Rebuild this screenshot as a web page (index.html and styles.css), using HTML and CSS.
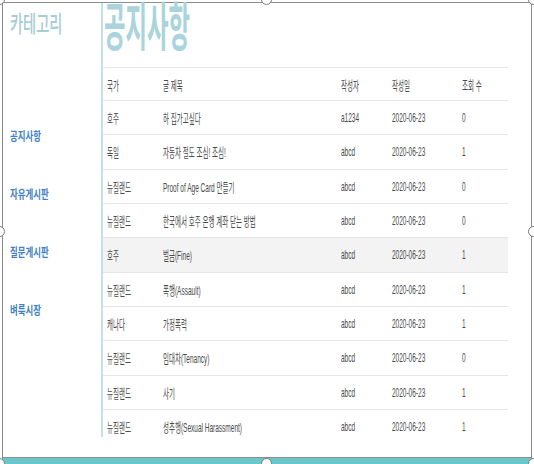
FILE: index.html
```html
<!DOCTYPE html>
<html lang="ko">
<head>
<meta charset="utf-8">
<link rel="stylesheet" href="styles.css">
</head>
<body>
<div class="frame">
  <div class="shot">
    <aside class="side">
      <div class="cat"><span class="sq-cat">카테고리</span></div>
      <nav class="nav">
        <a class="nav-item"><span class="sq-nav">공지사항</span></a>
        <a class="nav-item"><span class="sq-nav">자유게시판</span></a>
        <a class="nav-item"><span class="sq-nav">질문게시판</span></a>
        <a class="nav-item"><span class="sq-nav">벼룩시장</span></a>
      </nav>
    </aside>
    <main class="main">
      <h1 class="title"><span class="sq-title">공지사항</span></h1>
      <div class="board">
        <div class="row head">
          <div class="c c1"><span class="sq">국가</span></div>
          <div class="c c2"><span class="sq">글 제목</span></div>
          <div class="c c3"><span class="sq">작성자</span></div>
          <div class="c c4"><span class="sq">작성일</span></div>
          <div class="c c5"><span class="sq">조회 수</span></div>
        </div>
        <div class="row">
          <div class="c c1"><span class="sq">호주</span></div>
          <div class="c c2"><span class="sq">하 집가고싶다</span></div>
          <div class="c c3"><span class="sq">a1234</span></div>
          <div class="c c4"><span class="sq">2020-06-23</span></div>
          <div class="c c5"><span class="sq">0</span></div>
        </div>
        <div class="row">
          <div class="c c1"><span class="sq">독일</span></div>
          <div class="c c2"><span class="sq">자동차 절도 조심! 조심!</span></div>
          <div class="c c3"><span class="sq">abcd</span></div>
          <div class="c c4"><span class="sq">2020-06-23</span></div>
          <div class="c c5"><span class="sq">1</span></div>
        </div>
        <div class="row">
          <div class="c c1"><span class="sq">뉴질랜드</span></div>
          <div class="c c2"><span class="sq">Proof of Age Card 만들기</span></div>
          <div class="c c3"><span class="sq">abcd</span></div>
          <div class="c c4"><span class="sq">2020-06-23</span></div>
          <div class="c c5"><span class="sq">0</span></div>
        </div>
        <div class="row">
          <div class="c c1"><span class="sq">뉴질랜드</span></div>
          <div class="c c2"><span class="sq">한국에서 호주 은행 계좌 닫는 방법</span></div>
          <div class="c c3"><span class="sq">abcd</span></div>
          <div class="c c4"><span class="sq">2020-06-23</span></div>
          <div class="c c5"><span class="sq">0</span></div>
        </div>
        <div class="row hl">
          <div class="c c1"><span class="sq">호주</span></div>
          <div class="c c2"><span class="sq">벌금(Fine)</span></div>
          <div class="c c3"><span class="sq">abcd</span></div>
          <div class="c c4"><span class="sq">2020-06-23</span></div>
          <div class="c c5"><span class="sq">1</span></div>
        </div>
        <div class="row">
          <div class="c c1"><span class="sq">뉴질랜드</span></div>
          <div class="c c2"><span class="sq">폭행(Assault)</span></div>
          <div class="c c3"><span class="sq">abcd</span></div>
          <div class="c c4"><span class="sq">2020-06-23</span></div>
          <div class="c c5"><span class="sq">1</span></div>
        </div>
        <div class="row">
          <div class="c c1"><span class="sq">캐나다</span></div>
          <div class="c c2"><span class="sq">가정폭력</span></div>
          <div class="c c3"><span class="sq">abcd</span></div>
          <div class="c c4"><span class="sq">2020-06-23</span></div>
          <div class="c c5"><span class="sq">1</span></div>
        </div>
        <div class="row">
          <div class="c c1"><span class="sq">뉴질랜드</span></div>
          <div class="c c2"><span class="sq">임대차(Tenancy)</span></div>
          <div class="c c3"><span class="sq">abcd</span></div>
          <div class="c c4"><span class="sq">2020-06-23</span></div>
          <div class="c c5"><span class="sq">0</span></div>
        </div>
        <div class="row">
          <div class="c c1"><span class="sq">뉴질랜드</span></div>
          <div class="c c2"><span class="sq">사기</span></div>
          <div class="c c3"><span class="sq">abcd</span></div>
          <div class="c c4"><span class="sq">2020-06-23</span></div>
          <div class="c c5"><span class="sq">1</span></div>
        </div>
        <div class="row">
          <div class="c c1"><span class="sq">뉴질랜드</span></div>
          <div class="c c2"><span class="sq">성추행(Sexual Harassment)</span></div>
          <div class="c c3"><span class="sq">abcd</span></div>
          <div class="c c4"><span class="sq">2020-06-23</span></div>
          <div class="c c5"><span class="sq">1</span></div>
        </div>
      </div>
    </main>
  </div>
  <div class="spacer"></div>
  <div class="bar"></div>
</div>
<span class="handle h-tl"></span>
<span class="handle h-tm"></span>
<span class="handle h-tr"></span>
<span class="handle h-ml"></span>
<span class="handle h-mr"></span>
<span class="handle h-bl"></span>
<span class="handle h-bm"></span>
<span class="handle h-br"></span>
</body>
</html>
```
FILE: styles.css
```css
html, body {
  margin: 0;
  padding: 0;
}
body {
  width: 534px;
  height: 464px;
  overflow: hidden;
  position: relative;
  background: #ffffff;
  font-family: "Liberation Sans", "Noto Sans CJK KR", sans-serif;
}
.frame {
  margin: 2px 2px 0 2px;
  height: 462px;
  box-sizing: border-box;
  border: 1px solid #8c8c8c;
  border-bottom: none;
  display: flex;
  flex-direction: column;
  background: #fff;
}
.shot {
  display: flex;
  height: 434px;
  flex: none;
}
.spacer {
  flex: 1;
}
.bar {
  height: 6px;
  background: #6ac7cb;
  border-top: 1px solid #8c8c8c;
}

/* sidebar */
.side {
  width: 100px;
  flex: none;
  padding: 8px 0 0 7px;
  box-sizing: border-box;
  border-right: 2px solid #c6e1e6;
}
.cat {
  font-family: "Noto Sans CJK KR", sans-serif;
  font-size: 23px;
  line-height: 22px;
  font-weight: 500;
  color: #a6ccd5;
  white-space: nowrap;
}
.sq-cat {
  display: inline-block;
  transform: scaleX(0.62);
  transform-origin: left center;
}
.nav {
  display: flex;
  flex-direction: column;
  gap: 46px;
  margin-top: 97px;
}
.nav-item {
  font-family: "Noto Sans CJK KR", sans-serif;
  font-size: 12px;
  line-height: 12px;
  font-weight: 700;
  color: #4080c3;
  white-space: nowrap;
}
.sq-nav {
  display: inline-block;
  transform: scaleX(0.7);
  transform-origin: left center;
}

/* main */
.main {
  flex: 1;
  min-width: 0;
}
.title {
  margin: 0 0 22px 1px;
  font-family: "Noto Sans CJK KR", sans-serif;
  font-size: 52px;
  line-height: 42px;
  font-weight: 700;
  color: #a9d4db;
  white-space: nowrap;
}
.sq-title {
  display: inline-block;
  transform: scaleX(0.45);
  transform-origin: left center;
}
.board {
  width: 405px;
  height: 370px;
  overflow: hidden;
  border-top: 1px solid #e6e6e6;
  box-sizing: border-box;
}
.row {
  display: flex;
  height: 34.33px;
  box-sizing: border-box;
  border-bottom: 1px solid #e6e6e6;
  align-items: center;
  font-size: 13px;
  color: #4a4a4a;
}
.row.head {
  height: 33px;
}
.row.hl {
  background: #f3f3f3;
}
.c {
  padding-left: 4px;
  box-sizing: border-box;
  white-space: nowrap;
  flex: none;
}
.c1 { width: 56px; }
.c2 { width: 178px; }
.c3 { width: 51px; }
.c4 { width: 70px; }
.c5 { width: 50px; }
.sq {
  display: inline-block;
  transform: scaleX(0.5);
  transform-origin: left center;
}

/* selection handles */
.handle {
  position: absolute;
  width: 11px;
  height: 11px;
  box-sizing: border-box;
  border: 1px solid #7a7a7a;
  border-radius: 50%;
  background: #fff;
  margin: -6px 0 0 -6px;
}
.h-tl { left: 0; top: 0; }
.h-tm { left: 267px; top: 0; }
.h-tr { left: 534px; top: 0; }
.h-ml { left: 0; top: 232px; }
.h-mr { left: 534px; top: 232px; }
.h-bl { left: 0; top: 464px; }
.h-bm { left: 267px; top: 464px; }
.h-br { left: 534px; top: 464px; }
```
